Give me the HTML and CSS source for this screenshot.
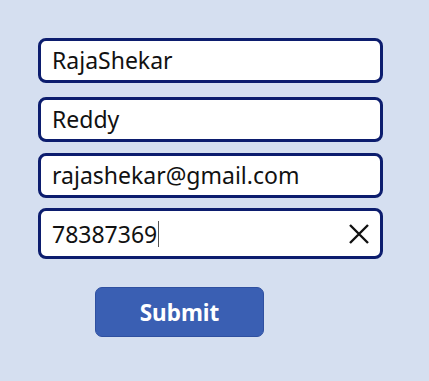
FILE: index.html
```html
<!DOCTYPE html>
<html lang="en">
<head>
    <meta charset="UTF-8">
    <meta name="viewport" content="width=device-width, initial-scale=1.0">
    <title>Form</title>
    <link rel="stylesheet" href="styles.css">
</head>
<body>

    <!-- Form fields -->
    <div class="form">
        <div class="field first">RajaShekar</div>
        <div class="field second">Reddy</div>
        <div class="field third">rajashekar@gmail.com</div>
        <div class="field phone">
            <span class="value">78387369<span class="caret"></span></span>
            <svg class="clear" width="22" height="22" viewBox="0 0 22 22">
                <path d="M2 2 L20 20 M20 2 L2 20" stroke="#111" stroke-width="2.4" fill="none"/>
            </svg>
        </div>

        <button class="submit">Submit</button>
    </div>

</body>
</html>
```

FILE: styles.css
```css
body {
    margin: 0;
    background-color: #d5dff0;
    font-family: "Noto Sans", "Open Sans", sans-serif;
    width: 429px;
    height: 381px;
    overflow: hidden;
}
.form {
    padding: 38px 0 0 38px;
}
.field {
    box-sizing: border-box;
    width: 345px;
    height: 45px;
    border: 3px solid #0c1d6e;
    border-radius: 8px;
    background: white;
    font-size: 23px;
    color: #111;
    padding-left: 11px;
    padding-bottom: 2px;
    display: flex;
    align-items: center;
}
.second {
    margin-top: 14px;
}
.third {
    margin-top: 11px;
}
.phone {
    margin-top: 10px;
    height: 51px;
    justify-content: space-between;
    padding-right: 10px;
    padding-bottom: 0;
}
.value {
    display: flex;
    align-items: center;
}
.caret {
    display: inline-block;
    width: 1px;
    height: 26px;
    background: #555;
    margin-left: 1px;
}
.submit {
    display: block;
    margin: 28px 0 0 57px;
    width: 169px;
    height: 50px;
    border: 1px solid #2f50a0;
    border-radius: 7px;
    background: #3a5fb3;
    color: white;
    font-family: "Noto Sans", "Open Sans", sans-serif;
    font-size: 22.5px;
    font-weight: bold;
    cursor: pointer;
}
```
